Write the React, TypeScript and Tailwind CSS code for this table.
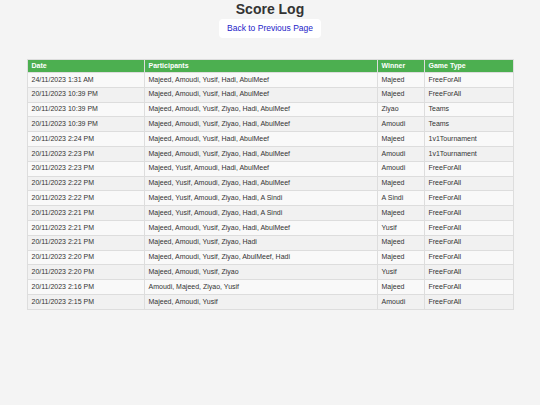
const rows = [
  ['24/11/2023 1:31 AM', 'Majeed, Amoudi, Yusif, Hadi, AbulMeef', 'Majeed', 'FreeForAll'],
  ['20/11/2023 10:39 PM', 'Majeed, Amoudi, Yusif, Hadi, AbulMeef', 'Majeed', 'FreeForAll'],
  ['20/11/2023 10:39 PM', 'Majeed, Amoudi, Yusif, Ziyao, Hadi, AbulMeef', 'Ziyao', 'Teams'],
  ['20/11/2023 10:39 PM', 'Majeed, Amoudi, Yusif, Ziyao, Hadi, AbulMeef', 'Amoudi', 'Teams'],
  ['20/11/2023 2:24 PM', 'Majeed, Amoudi, Yusif, Hadi, AbulMeef', 'Majeed', '1v1Tournament'],
  ['20/11/2023 2:23 PM', 'Majeed, Amoudi, Yusif, Ziyao, Hadi, AbulMeef', 'Amoudi', '1v1Tournament'],
  ['20/11/2023 2:23 PM', 'Majeed, Yusif, Amoudi, Hadi, AbulMeef', 'Amoudi', 'FreeForAll'],
  ['20/11/2023 2:22 PM', 'Majeed, Yusif, Amoudi, Ziyao, Hadi, AbulMeef', 'Majeed', 'FreeForAll'],
  ['20/11/2023 2:22 PM', 'Majeed, Yusif, Amoudi, Ziyao, Hadi, A Sindi', 'A Sindi', 'FreeForAll'],
  ['20/11/2023 2:21 PM', 'Majeed, Yusif, Amoudi, Ziyao, Hadi, A Sindi', 'Majeed', 'FreeForAll'],
  ['20/11/2023 2:21 PM', 'Majeed, Amoudi, Yusif, Ziyao, Hadi, AbulMeef', 'Yusif', 'FreeForAll'],
  ['20/11/2023 2:21 PM', 'Majeed, Amoudi, Yusif, Ziyao, Hadi', 'Majeed', 'FreeForAll'],
  ['20/11/2023 2:20 PM', 'Majeed, Amoudi, Yusif, Ziyao, AbulMeef, Hadi', 'Majeed', 'FreeForAll'],
  ['20/11/2023 2:20 PM', 'Majeed, Amoudi, Yusif, Ziyao', 'Yusif', 'FreeForAll'],
  ['20/11/2023 2:16 PM', 'Amoudi, Majeed, Ziyao, Yusif', 'Majeed', 'FreeForAll'],
  ['20/11/2023 2:15 PM', 'Majeed, Amoudi, Yusif', 'Amoudi', 'FreeForAll'],
];

export default function App() {
  return (
    <div className="min-h-screen bg-[#f4f4f4] font-['Liberation_Sans',Arial,sans-serif] text-[#333]">
      <h1 className="pt-[1px] text-center text-[14px] font-bold leading-[16px]">Score Log</h1>
      <div className="mt-[2px] flex justify-center">
        <button type="button" className="h-[19px] rounded-[4px] bg-white px-[8px] text-[8.5px] text-[#2323c8]">
          Back to Previous Page
        </button>
      </div>

      <table className="mx-auto mt-[21px] w-[486px] table-fixed border-collapse text-left text-[7px]">
        <colgroup>
          <col className="w-[117px]" />
          <col className="w-[233px]" />
          <col className="w-[47px]" />
          <col className="w-[89px]" />
        </colgroup>
        <thead>
          <tr className="bg-[#4caf50] text-white">
            <th className="h-[13px] border border-[#ddd] px-[4px] py-0 font-bold">Date</th>
            <th className="h-[13px] border border-[#ddd] px-[4px] py-0 font-bold">Participants</th>
            <th className="h-[13px] border border-[#ddd] px-[4px] py-0 font-bold">Winner</th>
            <th className="h-[13px] border border-[#ddd] px-[4px] py-0 font-bold">Game Type</th>
          </tr>
        </thead>
        <tbody>
          {rows.map((r, i) => (
            <tr key={i} className={i % 2 === 0 ? 'bg-[#f9f9f9]' : 'bg-[#f1f1f1]'}>
              {r.map((cell, j) => (
                <td key={j} className="h-[14.8px] whitespace-nowrap border border-[#ddd] px-[4px] py-0">
                  {cell}
                </td>
              ))}
            </tr>
          ))}
        </tbody>
      </table>
    </div>
  );
}
